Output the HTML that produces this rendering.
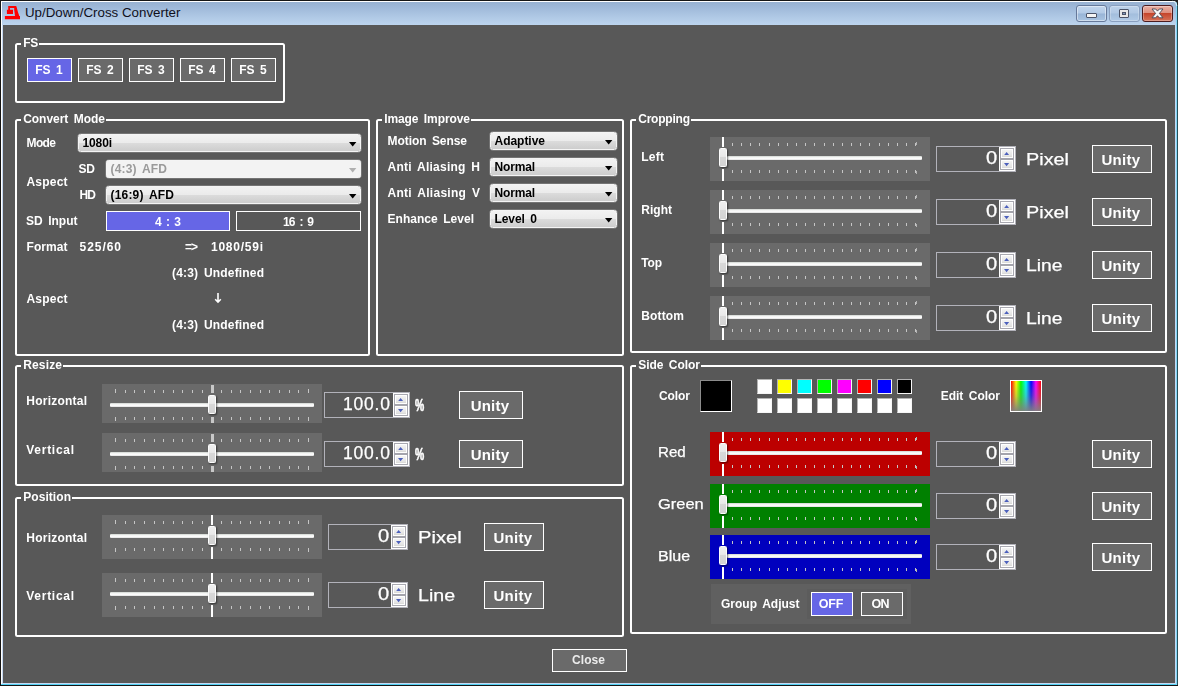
<!DOCTYPE html><html><head><meta charset="utf-8"><title>Up/Down/Cross Converter</title><style>
html,body{margin:0;padding:0}
body{width:1178px;height:686px;overflow:hidden;background:#585858;position:relative;font-family:"Liberation Sans",sans-serif}
div,svg{position:absolute}
.t{white-space:pre}
.g{border:2px solid #fff;border-radius:2.5px}
.b{border:1px solid #fff}
.sel{box-sizing:border-box;border-radius:2.5px;border:1px solid #f4f4f4;background:linear-gradient(#f2f2f2 0,#ebebeb 49%,#dcdcdc 50%,#cdcdcd 100%);box-shadow:0 0 0 0.5px rgba(255,255,255,.35)}
.sel.dis{background:#f3f3f3}
.tk{width:1px;height:3px;background:#c6c6c6}
.tr{height:4px;background:linear-gradient(#cdd2cd 0,#f1f2f1 30%,#fff 55%,#f2f2f2 80%,#dadada 100%);border-radius:1px}
.th{border-radius:1.5px;background:linear-gradient(#efefef 0,#e9e9e9 44%,#d8d8d8 45%,#d3d3d3 100%);border:1px solid #fcfcfc;box-sizing:border-box;box-shadow:1px 1px 2px rgba(0,0,0,.5)}
.sp{border:1px solid #b2b2ba;background:#585858}
.sb{left:3px;width:10px;height:7.3px;background:linear-gradient(#f4f4f4,#e4e4e4 80%,#d8d8d4)}
.sw{box-sizing:border-box;border:1px solid #f6f6f6;border-top-color:#b4b4b4;border-left-color:#b4b4b4}
</style></head><body>
<div style="left:0;top:0;width:1178px;height:686px;background:#151515"></div>
<div style="left:1px;top:1px;width:1177px;height:684.4px;background:#274f5a"></div>
<div style="left:1px;top:1px;width:1176px;height:684px;background:#7fd6f5"></div>
<div style="left:1px;top:1px;width:1175px;height:684px;background:#52d2f4"></div>
<div style="left:1px;top:1px;width:1175px;height:683px;background:#c6d8f2"></div>
<div style="left:1px;top:1px;width:1175px;height:24px;background:linear-gradient(#fff 0,#fff 1px,#98b2d2 1.5px,#a0bada 30%,#b1cae6 70%,#bcd4ee 100%)"></div>
<div style="left:1px;top:2px;width:1px;height:682px;background:#fff"></div>
<div style="left:3px;top:25px;width:1172px;height:658px;background:#585858"></div>
<svg style="left:1172px;top:0" width="6" height="6"><path d="M0 0H6V6L4.6 2.2L2.4 0.9z" fill="#222"/><path d="M0.5 1.2L3.6 2.4L4.8 5.8" stroke="#dff4fc" stroke-width="1" fill="none"/></svg>
<svg style="left:0;top:0" width="24" height="24" viewBox="0 0 24 24"><path fill="#fe0000" d="M8.2 5.9H16.2L16.9 8.1L18 12.2L19.3 16.1H20V19.2H4.9V16.1H15L14.5 12L14.2 9.9V8.1H10V9.8H13V13.9H6.9V9.8H8.2z"/></svg>
<div class="t" style="left:25.00px;top:7.36px;font-size:12.8px;line-height:12.8px;font-weight:normal;color:#10101c;letter-spacing:0.000px;transform:scaleX(1.0410);transform-origin:0 0;">Up/Down/Cross Converter</div>
<div style="left:1076px;top:5px;width:28.5px;height:14.5px;border:1px solid #66799a;border-radius:3px;background:linear-gradient(#c2d5ec 0,#b3cae6 48%,#98b4d6 52%,#a9c4e2 100%);box-shadow:inset 0 0 0 1px rgba(255,255,255,.45)"><div style="left:9.2px;top:7px;width:10.6px;height:4.8px;background:#f4f4f4;border:1px solid #4c5468;border-radius:1px;box-sizing:border-box"></div></div>
<div style="left:1109.3px;top:5px;width:28.5px;height:14.5px;border:1px solid #8aa0c0;border-radius:3px;background:linear-gradient(#bdd2ea 0,#b0c8e4 48%,#a2bddc 52%,#b0cae6 100%);box-shadow:inset 0 0 0 1px rgba(255,255,255,.25)"><div style="left:8.5px;top:3px;width:10.5px;height:9px;background:#e8e8e8;border:1px solid #4c5468;border-radius:1px;box-sizing:border-box"><div style="left:2px;top:2px;width:4.5px;height:3px;background:#7e96ba;border:1px solid #4c5468;box-sizing:border-box"></div></div></div>
<div style="left:1142px;top:5px;width:29px;height:14.5px;border:1px solid #4c1c20;border-radius:3px;background:linear-gradient(#e9b0a4 0,#de9080 44%,#c5452c 50%,#d67258 100%);box-shadow:inset 0 0 0 1px rgba(255,255,255,.3)"><svg width="13" height="11" style="left:8.3px;top:2.2px" viewBox="-1 -1 13 11"><path d="M0 0H3.7L5.5 2.1L7.3 0H11L7.4 4.4L11 8.8H7.3L5.5 6.7L3.7 8.8H0L3.6 4.4z" fill="#f8f8f8" stroke="#464654" stroke-width="0.9" stroke-linejoin="round"/></svg></div>
<div class="g" style="left:15.2px;top:43px;width:265.8px;height:56px"></div>
<div style="left:21.2px;top:41px;width:18.099999999999998px;height:6px;background:#585858"></div>
<div class="b" style="left:27px;top:58px;width:43px;height:22px;background:#6666e6"></div>
<div class="b" style="left:78px;top:58px;width:43px;height:22px;background:#6a6a6a"></div>
<div class="b" style="left:129px;top:58px;width:43px;height:22px;background:#6a6a6a"></div>
<div class="b" style="left:180px;top:58px;width:43px;height:22px;background:#6a6a6a"></div>
<div class="b" style="left:231px;top:58px;width:43px;height:22px;background:#6a6a6a"></div>
<div class="g" style="left:15.2px;top:119px;width:350.8px;height:233px"></div>
<div style="left:21.2px;top:117px;width:84.8px;height:6px;background:#585858"></div>
<div class="sel" style="left:78px;top:134px;width:282.5px;height:18px"></div>
<svg style="left:348.6px;top:142px" width="8" height="5"><path d="M0 0H7.4L3.7 4.5z" fill="#000"/></svg>
<div class="sel dis" style="left:106px;top:160px;width:255px;height:18px"></div>
<svg style="left:349.1px;top:168px" width="8" height="5"><path d="M0 0H7.4L3.7 4.5z" fill="#b0b0b0"/></svg>
<div class="sel" style="left:106px;top:186px;width:254.5px;height:18px"></div>
<svg style="left:348.6px;top:194px" width="8" height="5"><path d="M0 0H7.4L3.7 4.5z" fill="#000"/></svg>
<div class="b" style="left:106px;top:211px;width:122px;height:18px;background:#6666e6"></div>
<div class="b" style="left:236px;top:211px;width:123px;height:18px;background:#585858"></div>
<svg style="left:213.7px;top:293.3px" width="8" height="11" viewBox="0 0 8 11"><path d="M4 0V9M1.2 6.2L4 9.2L6.8 6.2" stroke="#fff" stroke-width="1.6" fill="none"/></svg>
<div class="g" style="left:376.2px;top:119px;width:243.8px;height:233px"></div>
<div style="left:382.2px;top:117px;width:88.80000000000001px;height:6px;background:#585858"></div>
<div class="sel" style="left:490px;top:132px;width:127px;height:18px"></div>
<svg style="left:605.1px;top:140px" width="8" height="5"><path d="M0 0H7.4L3.7 4.5z" fill="#000"/></svg>
<div class="sel" style="left:490px;top:158px;width:127px;height:18px"></div>
<svg style="left:605.1px;top:166px" width="8" height="5"><path d="M0 0H7.4L3.7 4.5z" fill="#000"/></svg>
<div class="sel" style="left:490px;top:184px;width:127px;height:18px"></div>
<svg style="left:605.1px;top:192px" width="8" height="5"><path d="M0 0H7.4L3.7 4.5z" fill="#000"/></svg>
<div class="sel" style="left:490px;top:210px;width:127px;height:18px"></div>
<svg style="left:605.1px;top:218px" width="8" height="5"><path d="M0 0H7.4L3.7 4.5z" fill="#000"/></svg>
<div class="g" style="left:630.2px;top:119px;width:532.8px;height:230px"></div>
<div style="left:636.2px;top:117px;width:54.799999999999955px;height:6px;background:#585858"></div>
<div style="left:710px;top:137px;width:220px;height:44px;background:#6a6a6a"></div>
<div class="tk" style="left:731.8px;top:143px;height:3px;width:1px;background:#c6c6c6"></div><div class="tk" style="left:731.8px;top:170px;height:3px;width:1px;background:#c6c6c6"></div><div class="tk" style="left:741.0px;top:143px;height:3px;width:1px;background:#c6c6c6"></div><div class="tk" style="left:741.0px;top:170px;height:3px;width:1px;background:#c6c6c6"></div><div class="tk" style="left:750.1px;top:143px;height:3px;width:1px;background:#c6c6c6"></div><div class="tk" style="left:750.1px;top:170px;height:3px;width:1px;background:#c6c6c6"></div><div class="tk" style="left:759.3px;top:143px;height:3px;width:1px;background:#c6c6c6"></div><div class="tk" style="left:759.3px;top:170px;height:3px;width:1px;background:#c6c6c6"></div><div class="tk" style="left:768.5px;top:143px;height:3px;width:1px;background:#c6c6c6"></div><div class="tk" style="left:768.5px;top:170px;height:3px;width:1px;background:#c6c6c6"></div><div class="tk" style="left:777.6px;top:143px;height:3px;width:1px;background:#c6c6c6"></div><div class="tk" style="left:777.6px;top:170px;height:3px;width:1px;background:#c6c6c6"></div><div class="tk" style="left:786.8px;top:143px;height:3px;width:1px;background:#c6c6c6"></div><div class="tk" style="left:786.8px;top:170px;height:3px;width:1px;background:#c6c6c6"></div><div class="tk" style="left:796.0px;top:143px;height:3px;width:1px;background:#c6c6c6"></div><div class="tk" style="left:796.0px;top:170px;height:3px;width:1px;background:#c6c6c6"></div><div class="tk" style="left:805.2px;top:143px;height:3px;width:1px;background:#c6c6c6"></div><div class="tk" style="left:805.2px;top:170px;height:3px;width:1px;background:#c6c6c6"></div><div class="tk" style="left:814.3px;top:143px;height:3px;width:1px;background:#c6c6c6"></div><div class="tk" style="left:814.3px;top:170px;height:3px;width:1px;background:#c6c6c6"></div><div class="tk" style="left:823.5px;top:143px;height:3px;width:1px;background:#c6c6c6"></div><div class="tk" style="left:823.5px;top:170px;height:3px;width:1px;background:#c6c6c6"></div><div class="tk" style="left:832.7px;top:143px;height:3px;width:1px;background:#c6c6c6"></div><div class="tk" style="left:832.7px;top:170px;height:3px;width:1px;background:#c6c6c6"></div><div class="tk" style="left:841.8px;top:143px;height:3px;width:1px;background:#c6c6c6"></div><div class="tk" style="left:841.8px;top:170px;height:3px;width:1px;background:#c6c6c6"></div><div class="tk" style="left:851.0px;top:143px;height:3px;width:1px;background:#c6c6c6"></div><div class="tk" style="left:851.0px;top:170px;height:3px;width:1px;background:#c6c6c6"></div><div class="tk" style="left:860.2px;top:143px;height:3px;width:1px;background:#c6c6c6"></div><div class="tk" style="left:860.2px;top:170px;height:3px;width:1px;background:#c6c6c6"></div><div class="tk" style="left:869.3px;top:143px;height:3px;width:1px;background:#c6c6c6"></div><div class="tk" style="left:869.3px;top:170px;height:3px;width:1px;background:#c6c6c6"></div><div class="tk" style="left:878.5px;top:143px;height:3px;width:1px;background:#c6c6c6"></div><div class="tk" style="left:878.5px;top:170px;height:3px;width:1px;background:#c6c6c6"></div><div class="tk" style="left:887.7px;top:143px;height:3px;width:1px;background:#c6c6c6"></div><div class="tk" style="left:887.7px;top:170px;height:3px;width:1px;background:#c6c6c6"></div><div class="tk" style="left:896.9px;top:143px;height:3px;width:1px;background:#c6c6c6"></div><div class="tk" style="left:896.9px;top:170px;height:3px;width:1px;background:#c6c6c6"></div><div class="tk" style="left:906.0px;top:143px;height:3px;width:1px;background:#c6c6c6"></div><div class="tk" style="left:906.0px;top:170px;height:3px;width:1px;background:#c6c6c6"></div><div class="tk" style="left:915.2px;top:143px;height:3px;width:1px;background:#c6c6c6"></div><div class="tk" style="left:916.4px;top:142px;height:3px;width:1px;background:#b4b4b4"></div><div class="tk" style="left:915.2px;top:170px;height:3px;width:1px;background:#c6c6c6"></div><div class="tk" style="left:916.4px;top:171px;height:3px;width:1px;background:#b4b4b4"></div><div style="left:722px;top:137px;width:2px;height:10px;background:#fff"></div><div style="left:722px;top:169px;width:2px;height:12px;background:#fff"></div><div class="tr" style="left:727px;top:156px;width:195px"></div><div class="th" style="left:718.8px;top:148px;width:8.6px;height:18.8px"></div>
<div class="sp" style="left:936px;top:146px;width:78px;height:24px"></div>
<div style="left:999px;top:147px;width:16px;height:24px;background:#fff"><div style="left:1px;top:1px;width:14px;height:22px;box-sizing:border-box;border:1px solid #a8a8b0"></div><div style="left:1px;top:11.3px;width:14px;height:1.3px;background:#a4a4ac"></div><div class="sb" style="top:3px"><svg width="6" height="3" style="left:1.9px;top:2px"><path d="M0 3.2L2.6 0L5.2 3.2z" fill="#4c60bc"/></svg></div><div class="sb" style="top:13.7px"><svg width="6" height="4" style="left:1.9px;top:2.3px"><path d="M0 0L2.6 3.2L5.2 0z" fill="#4c60bc"/></svg></div></div>
<div class="b" style="left:1092px;top:145px;width:58px;height:26px;background:#6a6a6a"></div>
<div style="left:710px;top:190px;width:220px;height:44px;background:#6a6a6a"></div>
<div class="tk" style="left:731.8px;top:196px;height:3px;width:1px;background:#c6c6c6"></div><div class="tk" style="left:731.8px;top:223px;height:3px;width:1px;background:#c6c6c6"></div><div class="tk" style="left:741.0px;top:196px;height:3px;width:1px;background:#c6c6c6"></div><div class="tk" style="left:741.0px;top:223px;height:3px;width:1px;background:#c6c6c6"></div><div class="tk" style="left:750.1px;top:196px;height:3px;width:1px;background:#c6c6c6"></div><div class="tk" style="left:750.1px;top:223px;height:3px;width:1px;background:#c6c6c6"></div><div class="tk" style="left:759.3px;top:196px;height:3px;width:1px;background:#c6c6c6"></div><div class="tk" style="left:759.3px;top:223px;height:3px;width:1px;background:#c6c6c6"></div><div class="tk" style="left:768.5px;top:196px;height:3px;width:1px;background:#c6c6c6"></div><div class="tk" style="left:768.5px;top:223px;height:3px;width:1px;background:#c6c6c6"></div><div class="tk" style="left:777.6px;top:196px;height:3px;width:1px;background:#c6c6c6"></div><div class="tk" style="left:777.6px;top:223px;height:3px;width:1px;background:#c6c6c6"></div><div class="tk" style="left:786.8px;top:196px;height:3px;width:1px;background:#c6c6c6"></div><div class="tk" style="left:786.8px;top:223px;height:3px;width:1px;background:#c6c6c6"></div><div class="tk" style="left:796.0px;top:196px;height:3px;width:1px;background:#c6c6c6"></div><div class="tk" style="left:796.0px;top:223px;height:3px;width:1px;background:#c6c6c6"></div><div class="tk" style="left:805.2px;top:196px;height:3px;width:1px;background:#c6c6c6"></div><div class="tk" style="left:805.2px;top:223px;height:3px;width:1px;background:#c6c6c6"></div><div class="tk" style="left:814.3px;top:196px;height:3px;width:1px;background:#c6c6c6"></div><div class="tk" style="left:814.3px;top:223px;height:3px;width:1px;background:#c6c6c6"></div><div class="tk" style="left:823.5px;top:196px;height:3px;width:1px;background:#c6c6c6"></div><div class="tk" style="left:823.5px;top:223px;height:3px;width:1px;background:#c6c6c6"></div><div class="tk" style="left:832.7px;top:196px;height:3px;width:1px;background:#c6c6c6"></div><div class="tk" style="left:832.7px;top:223px;height:3px;width:1px;background:#c6c6c6"></div><div class="tk" style="left:841.8px;top:196px;height:3px;width:1px;background:#c6c6c6"></div><div class="tk" style="left:841.8px;top:223px;height:3px;width:1px;background:#c6c6c6"></div><div class="tk" style="left:851.0px;top:196px;height:3px;width:1px;background:#c6c6c6"></div><div class="tk" style="left:851.0px;top:223px;height:3px;width:1px;background:#c6c6c6"></div><div class="tk" style="left:860.2px;top:196px;height:3px;width:1px;background:#c6c6c6"></div><div class="tk" style="left:860.2px;top:223px;height:3px;width:1px;background:#c6c6c6"></div><div class="tk" style="left:869.3px;top:196px;height:3px;width:1px;background:#c6c6c6"></div><div class="tk" style="left:869.3px;top:223px;height:3px;width:1px;background:#c6c6c6"></div><div class="tk" style="left:878.5px;top:196px;height:3px;width:1px;background:#c6c6c6"></div><div class="tk" style="left:878.5px;top:223px;height:3px;width:1px;background:#c6c6c6"></div><div class="tk" style="left:887.7px;top:196px;height:3px;width:1px;background:#c6c6c6"></div><div class="tk" style="left:887.7px;top:223px;height:3px;width:1px;background:#c6c6c6"></div><div class="tk" style="left:896.9px;top:196px;height:3px;width:1px;background:#c6c6c6"></div><div class="tk" style="left:896.9px;top:223px;height:3px;width:1px;background:#c6c6c6"></div><div class="tk" style="left:906.0px;top:196px;height:3px;width:1px;background:#c6c6c6"></div><div class="tk" style="left:906.0px;top:223px;height:3px;width:1px;background:#c6c6c6"></div><div class="tk" style="left:915.2px;top:196px;height:3px;width:1px;background:#c6c6c6"></div><div class="tk" style="left:916.4px;top:195px;height:3px;width:1px;background:#b4b4b4"></div><div class="tk" style="left:915.2px;top:223px;height:3px;width:1px;background:#c6c6c6"></div><div class="tk" style="left:916.4px;top:224px;height:3px;width:1px;background:#b4b4b4"></div><div style="left:722px;top:190px;width:2px;height:10px;background:#fff"></div><div style="left:722px;top:222px;width:2px;height:12px;background:#fff"></div><div class="tr" style="left:727px;top:209px;width:195px"></div><div class="th" style="left:718.8px;top:201px;width:8.6px;height:18.8px"></div>
<div class="sp" style="left:936px;top:199px;width:78px;height:24px"></div>
<div style="left:999px;top:200px;width:16px;height:24px;background:#fff"><div style="left:1px;top:1px;width:14px;height:22px;box-sizing:border-box;border:1px solid #a8a8b0"></div><div style="left:1px;top:11.3px;width:14px;height:1.3px;background:#a4a4ac"></div><div class="sb" style="top:3px"><svg width="6" height="3" style="left:1.9px;top:2px"><path d="M0 3.2L2.6 0L5.2 3.2z" fill="#4c60bc"/></svg></div><div class="sb" style="top:13.7px"><svg width="6" height="4" style="left:1.9px;top:2.3px"><path d="M0 0L2.6 3.2L5.2 0z" fill="#4c60bc"/></svg></div></div>
<div class="b" style="left:1092px;top:198px;width:58px;height:26px;background:#6a6a6a"></div>
<div style="left:710px;top:243px;width:220px;height:44px;background:#6a6a6a"></div>
<div class="tk" style="left:731.8px;top:249px;height:3px;width:1px;background:#c6c6c6"></div><div class="tk" style="left:731.8px;top:276px;height:3px;width:1px;background:#c6c6c6"></div><div class="tk" style="left:741.0px;top:249px;height:3px;width:1px;background:#c6c6c6"></div><div class="tk" style="left:741.0px;top:276px;height:3px;width:1px;background:#c6c6c6"></div><div class="tk" style="left:750.1px;top:249px;height:3px;width:1px;background:#c6c6c6"></div><div class="tk" style="left:750.1px;top:276px;height:3px;width:1px;background:#c6c6c6"></div><div class="tk" style="left:759.3px;top:249px;height:3px;width:1px;background:#c6c6c6"></div><div class="tk" style="left:759.3px;top:276px;height:3px;width:1px;background:#c6c6c6"></div><div class="tk" style="left:768.5px;top:249px;height:3px;width:1px;background:#c6c6c6"></div><div class="tk" style="left:768.5px;top:276px;height:3px;width:1px;background:#c6c6c6"></div><div class="tk" style="left:777.6px;top:249px;height:3px;width:1px;background:#c6c6c6"></div><div class="tk" style="left:777.6px;top:276px;height:3px;width:1px;background:#c6c6c6"></div><div class="tk" style="left:786.8px;top:249px;height:3px;width:1px;background:#c6c6c6"></div><div class="tk" style="left:786.8px;top:276px;height:3px;width:1px;background:#c6c6c6"></div><div class="tk" style="left:796.0px;top:249px;height:3px;width:1px;background:#c6c6c6"></div><div class="tk" style="left:796.0px;top:276px;height:3px;width:1px;background:#c6c6c6"></div><div class="tk" style="left:805.2px;top:249px;height:3px;width:1px;background:#c6c6c6"></div><div class="tk" style="left:805.2px;top:276px;height:3px;width:1px;background:#c6c6c6"></div><div class="tk" style="left:814.3px;top:249px;height:3px;width:1px;background:#c6c6c6"></div><div class="tk" style="left:814.3px;top:276px;height:3px;width:1px;background:#c6c6c6"></div><div class="tk" style="left:823.5px;top:249px;height:3px;width:1px;background:#c6c6c6"></div><div class="tk" style="left:823.5px;top:276px;height:3px;width:1px;background:#c6c6c6"></div><div class="tk" style="left:832.7px;top:249px;height:3px;width:1px;background:#c6c6c6"></div><div class="tk" style="left:832.7px;top:276px;height:3px;width:1px;background:#c6c6c6"></div><div class="tk" style="left:841.8px;top:249px;height:3px;width:1px;background:#c6c6c6"></div><div class="tk" style="left:841.8px;top:276px;height:3px;width:1px;background:#c6c6c6"></div><div class="tk" style="left:851.0px;top:249px;height:3px;width:1px;background:#c6c6c6"></div><div class="tk" style="left:851.0px;top:276px;height:3px;width:1px;background:#c6c6c6"></div><div class="tk" style="left:860.2px;top:249px;height:3px;width:1px;background:#c6c6c6"></div><div class="tk" style="left:860.2px;top:276px;height:3px;width:1px;background:#c6c6c6"></div><div class="tk" style="left:869.3px;top:249px;height:3px;width:1px;background:#c6c6c6"></div><div class="tk" style="left:869.3px;top:276px;height:3px;width:1px;background:#c6c6c6"></div><div class="tk" style="left:878.5px;top:249px;height:3px;width:1px;background:#c6c6c6"></div><div class="tk" style="left:878.5px;top:276px;height:3px;width:1px;background:#c6c6c6"></div><div class="tk" style="left:887.7px;top:249px;height:3px;width:1px;background:#c6c6c6"></div><div class="tk" style="left:887.7px;top:276px;height:3px;width:1px;background:#c6c6c6"></div><div class="tk" style="left:896.9px;top:249px;height:3px;width:1px;background:#c6c6c6"></div><div class="tk" style="left:896.9px;top:276px;height:3px;width:1px;background:#c6c6c6"></div><div class="tk" style="left:906.0px;top:249px;height:3px;width:1px;background:#c6c6c6"></div><div class="tk" style="left:906.0px;top:276px;height:3px;width:1px;background:#c6c6c6"></div><div class="tk" style="left:915.2px;top:249px;height:3px;width:1px;background:#c6c6c6"></div><div class="tk" style="left:916.4px;top:248px;height:3px;width:1px;background:#b4b4b4"></div><div class="tk" style="left:915.2px;top:276px;height:3px;width:1px;background:#c6c6c6"></div><div class="tk" style="left:916.4px;top:277px;height:3px;width:1px;background:#b4b4b4"></div><div style="left:722px;top:243px;width:2px;height:10px;background:#fff"></div><div style="left:722px;top:275px;width:2px;height:12px;background:#fff"></div><div class="tr" style="left:727px;top:262px;width:195px"></div><div class="th" style="left:718.8px;top:254px;width:8.6px;height:18.8px"></div>
<div class="sp" style="left:936px;top:252px;width:78px;height:24px"></div>
<div style="left:999px;top:253px;width:16px;height:24px;background:#fff"><div style="left:1px;top:1px;width:14px;height:22px;box-sizing:border-box;border:1px solid #a8a8b0"></div><div style="left:1px;top:11.3px;width:14px;height:1.3px;background:#a4a4ac"></div><div class="sb" style="top:3px"><svg width="6" height="3" style="left:1.9px;top:2px"><path d="M0 3.2L2.6 0L5.2 3.2z" fill="#4c60bc"/></svg></div><div class="sb" style="top:13.7px"><svg width="6" height="4" style="left:1.9px;top:2.3px"><path d="M0 0L2.6 3.2L5.2 0z" fill="#4c60bc"/></svg></div></div>
<div class="b" style="left:1092px;top:251px;width:58px;height:26px;background:#6a6a6a"></div>
<div style="left:710px;top:296px;width:220px;height:44px;background:#6a6a6a"></div>
<div class="tk" style="left:731.8px;top:302px;height:3px;width:1px;background:#c6c6c6"></div><div class="tk" style="left:731.8px;top:329px;height:3px;width:1px;background:#c6c6c6"></div><div class="tk" style="left:741.0px;top:302px;height:3px;width:1px;background:#c6c6c6"></div><div class="tk" style="left:741.0px;top:329px;height:3px;width:1px;background:#c6c6c6"></div><div class="tk" style="left:750.1px;top:302px;height:3px;width:1px;background:#c6c6c6"></div><div class="tk" style="left:750.1px;top:329px;height:3px;width:1px;background:#c6c6c6"></div><div class="tk" style="left:759.3px;top:302px;height:3px;width:1px;background:#c6c6c6"></div><div class="tk" style="left:759.3px;top:329px;height:3px;width:1px;background:#c6c6c6"></div><div class="tk" style="left:768.5px;top:302px;height:3px;width:1px;background:#c6c6c6"></div><div class="tk" style="left:768.5px;top:329px;height:3px;width:1px;background:#c6c6c6"></div><div class="tk" style="left:777.6px;top:302px;height:3px;width:1px;background:#c6c6c6"></div><div class="tk" style="left:777.6px;top:329px;height:3px;width:1px;background:#c6c6c6"></div><div class="tk" style="left:786.8px;top:302px;height:3px;width:1px;background:#c6c6c6"></div><div class="tk" style="left:786.8px;top:329px;height:3px;width:1px;background:#c6c6c6"></div><div class="tk" style="left:796.0px;top:302px;height:3px;width:1px;background:#c6c6c6"></div><div class="tk" style="left:796.0px;top:329px;height:3px;width:1px;background:#c6c6c6"></div><div class="tk" style="left:805.2px;top:302px;height:3px;width:1px;background:#c6c6c6"></div><div class="tk" style="left:805.2px;top:329px;height:3px;width:1px;background:#c6c6c6"></div><div class="tk" style="left:814.3px;top:302px;height:3px;width:1px;background:#c6c6c6"></div><div class="tk" style="left:814.3px;top:329px;height:3px;width:1px;background:#c6c6c6"></div><div class="tk" style="left:823.5px;top:302px;height:3px;width:1px;background:#c6c6c6"></div><div class="tk" style="left:823.5px;top:329px;height:3px;width:1px;background:#c6c6c6"></div><div class="tk" style="left:832.7px;top:302px;height:3px;width:1px;background:#c6c6c6"></div><div class="tk" style="left:832.7px;top:329px;height:3px;width:1px;background:#c6c6c6"></div><div class="tk" style="left:841.8px;top:302px;height:3px;width:1px;background:#c6c6c6"></div><div class="tk" style="left:841.8px;top:329px;height:3px;width:1px;background:#c6c6c6"></div><div class="tk" style="left:851.0px;top:302px;height:3px;width:1px;background:#c6c6c6"></div><div class="tk" style="left:851.0px;top:329px;height:3px;width:1px;background:#c6c6c6"></div><div class="tk" style="left:860.2px;top:302px;height:3px;width:1px;background:#c6c6c6"></div><div class="tk" style="left:860.2px;top:329px;height:3px;width:1px;background:#c6c6c6"></div><div class="tk" style="left:869.3px;top:302px;height:3px;width:1px;background:#c6c6c6"></div><div class="tk" style="left:869.3px;top:329px;height:3px;width:1px;background:#c6c6c6"></div><div class="tk" style="left:878.5px;top:302px;height:3px;width:1px;background:#c6c6c6"></div><div class="tk" style="left:878.5px;top:329px;height:3px;width:1px;background:#c6c6c6"></div><div class="tk" style="left:887.7px;top:302px;height:3px;width:1px;background:#c6c6c6"></div><div class="tk" style="left:887.7px;top:329px;height:3px;width:1px;background:#c6c6c6"></div><div class="tk" style="left:896.9px;top:302px;height:3px;width:1px;background:#c6c6c6"></div><div class="tk" style="left:896.9px;top:329px;height:3px;width:1px;background:#c6c6c6"></div><div class="tk" style="left:906.0px;top:302px;height:3px;width:1px;background:#c6c6c6"></div><div class="tk" style="left:906.0px;top:329px;height:3px;width:1px;background:#c6c6c6"></div><div class="tk" style="left:915.2px;top:302px;height:3px;width:1px;background:#c6c6c6"></div><div class="tk" style="left:916.4px;top:301px;height:3px;width:1px;background:#b4b4b4"></div><div class="tk" style="left:915.2px;top:329px;height:3px;width:1px;background:#c6c6c6"></div><div class="tk" style="left:916.4px;top:330px;height:3px;width:1px;background:#b4b4b4"></div><div style="left:722px;top:296px;width:2px;height:10px;background:#fff"></div><div style="left:722px;top:328px;width:2px;height:12px;background:#fff"></div><div class="tr" style="left:727px;top:315px;width:195px"></div><div class="th" style="left:718.8px;top:307px;width:8.6px;height:18.8px"></div>
<div class="sp" style="left:936px;top:305px;width:78px;height:24px"></div>
<div style="left:999px;top:306px;width:16px;height:24px;background:#fff"><div style="left:1px;top:1px;width:14px;height:22px;box-sizing:border-box;border:1px solid #a8a8b0"></div><div style="left:1px;top:11.3px;width:14px;height:1.3px;background:#a4a4ac"></div><div class="sb" style="top:3px"><svg width="6" height="3" style="left:1.9px;top:2px"><path d="M0 3.2L2.6 0L5.2 3.2z" fill="#4c60bc"/></svg></div><div class="sb" style="top:13.7px"><svg width="6" height="4" style="left:1.9px;top:2.3px"><path d="M0 0L2.6 3.2L5.2 0z" fill="#4c60bc"/></svg></div></div>
<div class="b" style="left:1092px;top:304px;width:58px;height:26px;background:#6a6a6a"></div>
<div class="g" style="left:15.2px;top:365px;width:604.8px;height:117px"></div>
<div style="left:21.2px;top:363px;width:41.8px;height:6px;background:#585858"></div>
<div style="left:102px;top:384px;width:220px;height:39px;background:#6a6a6a"></div>
<div class="tk" style="left:114.9px;top:389px;height:4px;width:1px;background:#c6c6c6"></div><div class="tk" style="left:114.9px;top:417px;height:4px;width:1px;background:#c6c6c6"></div><div class="tk" style="left:124.6px;top:390px;height:3px;width:1px;background:#c6c6c6"></div><div class="tk" style="left:124.6px;top:417px;height:3px;width:1px;background:#c6c6c6"></div><div class="tk" style="left:134.2px;top:390px;height:3px;width:1px;background:#c6c6c6"></div><div class="tk" style="left:134.2px;top:417px;height:3px;width:1px;background:#c6c6c6"></div><div class="tk" style="left:143.9px;top:390px;height:3px;width:1px;background:#c6c6c6"></div><div class="tk" style="left:143.9px;top:417px;height:3px;width:1px;background:#c6c6c6"></div><div class="tk" style="left:153.5px;top:390px;height:3px;width:1px;background:#c6c6c6"></div><div class="tk" style="left:153.5px;top:417px;height:3px;width:1px;background:#c6c6c6"></div><div class="tk" style="left:163.2px;top:390px;height:3px;width:1px;background:#c6c6c6"></div><div class="tk" style="left:163.2px;top:417px;height:3px;width:1px;background:#c6c6c6"></div><div class="tk" style="left:172.8px;top:390px;height:3px;width:1px;background:#c6c6c6"></div><div class="tk" style="left:172.8px;top:417px;height:3px;width:1px;background:#c6c6c6"></div><div class="tk" style="left:182.4px;top:390px;height:3px;width:1px;background:#c6c6c6"></div><div class="tk" style="left:182.4px;top:417px;height:3px;width:1px;background:#c6c6c6"></div><div class="tk" style="left:192.1px;top:390px;height:3px;width:1px;background:#c6c6c6"></div><div class="tk" style="left:192.1px;top:417px;height:3px;width:1px;background:#c6c6c6"></div><div class="tk" style="left:201.8px;top:390px;height:3px;width:1px;background:#c6c6c6"></div><div class="tk" style="left:201.8px;top:417px;height:3px;width:1px;background:#c6c6c6"></div><div class="tk" style="left:221.1px;top:390px;height:3px;width:1px;background:#c6c6c6"></div><div class="tk" style="left:221.1px;top:417px;height:3px;width:1px;background:#c6c6c6"></div><div class="tk" style="left:230.7px;top:390px;height:3px;width:1px;background:#c6c6c6"></div><div class="tk" style="left:230.7px;top:417px;height:3px;width:1px;background:#c6c6c6"></div><div class="tk" style="left:240.4px;top:390px;height:3px;width:1px;background:#c6c6c6"></div><div class="tk" style="left:240.4px;top:417px;height:3px;width:1px;background:#c6c6c6"></div><div class="tk" style="left:250.0px;top:390px;height:3px;width:1px;background:#c6c6c6"></div><div class="tk" style="left:250.0px;top:417px;height:3px;width:1px;background:#c6c6c6"></div><div class="tk" style="left:259.6px;top:390px;height:3px;width:1px;background:#c6c6c6"></div><div class="tk" style="left:259.6px;top:417px;height:3px;width:1px;background:#c6c6c6"></div><div class="tk" style="left:269.3px;top:390px;height:3px;width:1px;background:#c6c6c6"></div><div class="tk" style="left:269.3px;top:417px;height:3px;width:1px;background:#c6c6c6"></div><div class="tk" style="left:279.0px;top:390px;height:3px;width:1px;background:#c6c6c6"></div><div class="tk" style="left:279.0px;top:417px;height:3px;width:1px;background:#c6c6c6"></div><div class="tk" style="left:288.6px;top:390px;height:3px;width:1px;background:#c6c6c6"></div><div class="tk" style="left:288.6px;top:417px;height:3px;width:1px;background:#c6c6c6"></div><div class="tk" style="left:298.2px;top:390px;height:3px;width:1px;background:#c6c6c6"></div><div class="tk" style="left:298.2px;top:417px;height:3px;width:1px;background:#c6c6c6"></div><div class="tk" style="left:307.9px;top:389px;height:4px;width:1px;background:#c6c6c6"></div><div class="tk" style="left:307.9px;top:417px;height:4px;width:1px;background:#c6c6c6"></div><div style="left:211.0px;top:385px;width:3px;height:8px;background:#c8c8c8"></div><div style="left:211.0px;top:417px;width:3px;height:6px;background:#c8c8c8"></div><div class="tr" style="left:110px;top:403px;width:204px"></div><div class="th" style="left:207.9px;top:394.6px;width:8.6px;height:19.8px"></div>
<div class="sp" style="left:324px;top:392px;width:84px;height:24px"></div>
<div style="left:393px;top:393px;width:16px;height:24px;background:#fff"><div style="left:1px;top:1px;width:14px;height:22px;box-sizing:border-box;border:1px solid #a8a8b0"></div><div style="left:1px;top:11.3px;width:14px;height:1.3px;background:#a4a4ac"></div><div class="sb" style="top:3px"><svg width="6" height="3" style="left:1.9px;top:2px"><path d="M0 3.2L2.6 0L5.2 3.2z" fill="#4c60bc"/></svg></div><div class="sb" style="top:13.7px"><svg width="6" height="4" style="left:1.9px;top:2.3px"><path d="M0 0L2.6 3.2L5.2 0z" fill="#4c60bc"/></svg></div></div>
<div class="b" style="left:459px;top:391px;width:62px;height:26px;background:#6a6a6a"></div>
<div style="left:102px;top:433px;width:220px;height:39px;background:#6a6a6a"></div>
<div class="tk" style="left:114.9px;top:438px;height:4px;width:1px;background:#c6c6c6"></div><div class="tk" style="left:114.9px;top:466px;height:4px;width:1px;background:#c6c6c6"></div><div class="tk" style="left:124.6px;top:439px;height:3px;width:1px;background:#c6c6c6"></div><div class="tk" style="left:124.6px;top:466px;height:3px;width:1px;background:#c6c6c6"></div><div class="tk" style="left:134.2px;top:439px;height:3px;width:1px;background:#c6c6c6"></div><div class="tk" style="left:134.2px;top:466px;height:3px;width:1px;background:#c6c6c6"></div><div class="tk" style="left:143.9px;top:439px;height:3px;width:1px;background:#c6c6c6"></div><div class="tk" style="left:143.9px;top:466px;height:3px;width:1px;background:#c6c6c6"></div><div class="tk" style="left:153.5px;top:439px;height:3px;width:1px;background:#c6c6c6"></div><div class="tk" style="left:153.5px;top:466px;height:3px;width:1px;background:#c6c6c6"></div><div class="tk" style="left:163.2px;top:439px;height:3px;width:1px;background:#c6c6c6"></div><div class="tk" style="left:163.2px;top:466px;height:3px;width:1px;background:#c6c6c6"></div><div class="tk" style="left:172.8px;top:439px;height:3px;width:1px;background:#c6c6c6"></div><div class="tk" style="left:172.8px;top:466px;height:3px;width:1px;background:#c6c6c6"></div><div class="tk" style="left:182.4px;top:439px;height:3px;width:1px;background:#c6c6c6"></div><div class="tk" style="left:182.4px;top:466px;height:3px;width:1px;background:#c6c6c6"></div><div class="tk" style="left:192.1px;top:439px;height:3px;width:1px;background:#c6c6c6"></div><div class="tk" style="left:192.1px;top:466px;height:3px;width:1px;background:#c6c6c6"></div><div class="tk" style="left:201.8px;top:439px;height:3px;width:1px;background:#c6c6c6"></div><div class="tk" style="left:201.8px;top:466px;height:3px;width:1px;background:#c6c6c6"></div><div class="tk" style="left:221.1px;top:439px;height:3px;width:1px;background:#c6c6c6"></div><div class="tk" style="left:221.1px;top:466px;height:3px;width:1px;background:#c6c6c6"></div><div class="tk" style="left:230.7px;top:439px;height:3px;width:1px;background:#c6c6c6"></div><div class="tk" style="left:230.7px;top:466px;height:3px;width:1px;background:#c6c6c6"></div><div class="tk" style="left:240.4px;top:439px;height:3px;width:1px;background:#c6c6c6"></div><div class="tk" style="left:240.4px;top:466px;height:3px;width:1px;background:#c6c6c6"></div><div class="tk" style="left:250.0px;top:439px;height:3px;width:1px;background:#c6c6c6"></div><div class="tk" style="left:250.0px;top:466px;height:3px;width:1px;background:#c6c6c6"></div><div class="tk" style="left:259.6px;top:439px;height:3px;width:1px;background:#c6c6c6"></div><div class="tk" style="left:259.6px;top:466px;height:3px;width:1px;background:#c6c6c6"></div><div class="tk" style="left:269.3px;top:439px;height:3px;width:1px;background:#c6c6c6"></div><div class="tk" style="left:269.3px;top:466px;height:3px;width:1px;background:#c6c6c6"></div><div class="tk" style="left:279.0px;top:439px;height:3px;width:1px;background:#c6c6c6"></div><div class="tk" style="left:279.0px;top:466px;height:3px;width:1px;background:#c6c6c6"></div><div class="tk" style="left:288.6px;top:439px;height:3px;width:1px;background:#c6c6c6"></div><div class="tk" style="left:288.6px;top:466px;height:3px;width:1px;background:#c6c6c6"></div><div class="tk" style="left:298.2px;top:439px;height:3px;width:1px;background:#c6c6c6"></div><div class="tk" style="left:298.2px;top:466px;height:3px;width:1px;background:#c6c6c6"></div><div class="tk" style="left:307.9px;top:438px;height:4px;width:1px;background:#c6c6c6"></div><div class="tk" style="left:307.9px;top:466px;height:4px;width:1px;background:#c6c6c6"></div><div style="left:211.0px;top:434px;width:3px;height:8px;background:#c8c8c8"></div><div style="left:211.0px;top:466px;width:3px;height:6px;background:#c8c8c8"></div><div class="tr" style="left:110px;top:452px;width:204px"></div><div class="th" style="left:207.9px;top:443.6px;width:8.6px;height:19.8px"></div>
<div class="sp" style="left:324px;top:441px;width:84px;height:24px"></div>
<div style="left:393px;top:442px;width:16px;height:24px;background:#fff"><div style="left:1px;top:1px;width:14px;height:22px;box-sizing:border-box;border:1px solid #a8a8b0"></div><div style="left:1px;top:11.3px;width:14px;height:1.3px;background:#a4a4ac"></div><div class="sb" style="top:3px"><svg width="6" height="3" style="left:1.9px;top:2px"><path d="M0 3.2L2.6 0L5.2 3.2z" fill="#4c60bc"/></svg></div><div class="sb" style="top:13.7px"><svg width="6" height="4" style="left:1.9px;top:2.3px"><path d="M0 0L2.6 3.2L5.2 0z" fill="#4c60bc"/></svg></div></div>
<div class="b" style="left:459px;top:440px;width:62px;height:26px;background:#6a6a6a"></div>
<div class="g" style="left:15.2px;top:497px;width:604.8px;height:136px"></div>
<div style="left:21.2px;top:495px;width:50.8px;height:6px;background:#585858"></div>
<div style="left:102px;top:515px;width:220px;height:44px;background:#6a6a6a"></div>
<div class="tk" style="left:114.9px;top:520px;height:4px;width:1px;background:#c6c6c6"></div><div class="tk" style="left:114.9px;top:548px;height:4px;width:1px;background:#c6c6c6"></div><div class="tk" style="left:124.6px;top:521px;height:3px;width:1px;background:#c6c6c6"></div><div class="tk" style="left:124.6px;top:548px;height:3px;width:1px;background:#c6c6c6"></div><div class="tk" style="left:134.2px;top:521px;height:3px;width:1px;background:#c6c6c6"></div><div class="tk" style="left:134.2px;top:548px;height:3px;width:1px;background:#c6c6c6"></div><div class="tk" style="left:143.9px;top:521px;height:3px;width:1px;background:#c6c6c6"></div><div class="tk" style="left:143.9px;top:548px;height:3px;width:1px;background:#c6c6c6"></div><div class="tk" style="left:153.5px;top:521px;height:3px;width:1px;background:#c6c6c6"></div><div class="tk" style="left:153.5px;top:548px;height:3px;width:1px;background:#c6c6c6"></div><div class="tk" style="left:163.2px;top:521px;height:3px;width:1px;background:#c6c6c6"></div><div class="tk" style="left:163.2px;top:548px;height:3px;width:1px;background:#c6c6c6"></div><div class="tk" style="left:172.8px;top:521px;height:3px;width:1px;background:#c6c6c6"></div><div class="tk" style="left:172.8px;top:548px;height:3px;width:1px;background:#c6c6c6"></div><div class="tk" style="left:182.4px;top:521px;height:3px;width:1px;background:#c6c6c6"></div><div class="tk" style="left:182.4px;top:548px;height:3px;width:1px;background:#c6c6c6"></div><div class="tk" style="left:192.1px;top:521px;height:3px;width:1px;background:#c6c6c6"></div><div class="tk" style="left:192.1px;top:548px;height:3px;width:1px;background:#c6c6c6"></div><div class="tk" style="left:201.8px;top:521px;height:3px;width:1px;background:#c6c6c6"></div><div class="tk" style="left:201.8px;top:548px;height:3px;width:1px;background:#c6c6c6"></div><div class="tk" style="left:221.1px;top:521px;height:3px;width:1px;background:#c6c6c6"></div><div class="tk" style="left:221.1px;top:548px;height:3px;width:1px;background:#c6c6c6"></div><div class="tk" style="left:230.7px;top:521px;height:3px;width:1px;background:#c6c6c6"></div><div class="tk" style="left:230.7px;top:548px;height:3px;width:1px;background:#c6c6c6"></div><div class="tk" style="left:240.4px;top:521px;height:3px;width:1px;background:#c6c6c6"></div><div class="tk" style="left:240.4px;top:548px;height:3px;width:1px;background:#c6c6c6"></div><div class="tk" style="left:250.0px;top:521px;height:3px;width:1px;background:#c6c6c6"></div><div class="tk" style="left:250.0px;top:548px;height:3px;width:1px;background:#c6c6c6"></div><div class="tk" style="left:259.6px;top:521px;height:3px;width:1px;background:#c6c6c6"></div><div class="tk" style="left:259.6px;top:548px;height:3px;width:1px;background:#c6c6c6"></div><div class="tk" style="left:269.3px;top:521px;height:3px;width:1px;background:#c6c6c6"></div><div class="tk" style="left:269.3px;top:548px;height:3px;width:1px;background:#c6c6c6"></div><div class="tk" style="left:279.0px;top:521px;height:3px;width:1px;background:#c6c6c6"></div><div class="tk" style="left:279.0px;top:548px;height:3px;width:1px;background:#c6c6c6"></div><div class="tk" style="left:288.6px;top:521px;height:3px;width:1px;background:#c6c6c6"></div><div class="tk" style="left:288.6px;top:548px;height:3px;width:1px;background:#c6c6c6"></div><div class="tk" style="left:298.2px;top:521px;height:3px;width:1px;background:#c6c6c6"></div><div class="tk" style="left:298.2px;top:548px;height:3px;width:1px;background:#c6c6c6"></div><div class="tk" style="left:307.9px;top:520px;height:4px;width:1px;background:#c6c6c6"></div><div class="tk" style="left:307.9px;top:548px;height:4px;width:1px;background:#c6c6c6"></div><div style="left:211.0px;top:515px;width:2px;height:9.6px;background:#fff"></div><div style="left:211.0px;top:547.2px;width:2px;height:11.799999999999997px;background:#fff"></div><div class="tr" style="left:110px;top:534px;width:204px"></div><div class="th" style="left:207.9px;top:526px;width:8.6px;height:19px"></div>
<div class="sp" style="left:328px;top:524px;width:78px;height:24px"></div>
<div style="left:391px;top:525px;width:16px;height:24px;background:#fff"><div style="left:1px;top:1px;width:14px;height:22px;box-sizing:border-box;border:1px solid #a8a8b0"></div><div style="left:1px;top:11.3px;width:14px;height:1.3px;background:#a4a4ac"></div><div class="sb" style="top:3px"><svg width="6" height="3" style="left:1.9px;top:2px"><path d="M0 3.2L2.6 0L5.2 3.2z" fill="#4c60bc"/></svg></div><div class="sb" style="top:13.7px"><svg width="6" height="4" style="left:1.9px;top:2.3px"><path d="M0 0L2.6 3.2L5.2 0z" fill="#4c60bc"/></svg></div></div>
<div class="b" style="left:484px;top:523px;width:58px;height:26px;background:#6a6a6a"></div>
<div style="left:102px;top:573px;width:220px;height:44px;background:#6a6a6a"></div>
<div class="tk" style="left:114.9px;top:578px;height:4px;width:1px;background:#c6c6c6"></div><div class="tk" style="left:114.9px;top:606px;height:4px;width:1px;background:#c6c6c6"></div><div class="tk" style="left:124.6px;top:579px;height:3px;width:1px;background:#c6c6c6"></div><div class="tk" style="left:124.6px;top:606px;height:3px;width:1px;background:#c6c6c6"></div><div class="tk" style="left:134.2px;top:579px;height:3px;width:1px;background:#c6c6c6"></div><div class="tk" style="left:134.2px;top:606px;height:3px;width:1px;background:#c6c6c6"></div><div class="tk" style="left:143.9px;top:579px;height:3px;width:1px;background:#c6c6c6"></div><div class="tk" style="left:143.9px;top:606px;height:3px;width:1px;background:#c6c6c6"></div><div class="tk" style="left:153.5px;top:579px;height:3px;width:1px;background:#c6c6c6"></div><div class="tk" style="left:153.5px;top:606px;height:3px;width:1px;background:#c6c6c6"></div><div class="tk" style="left:163.2px;top:579px;height:3px;width:1px;background:#c6c6c6"></div><div class="tk" style="left:163.2px;top:606px;height:3px;width:1px;background:#c6c6c6"></div><div class="tk" style="left:172.8px;top:579px;height:3px;width:1px;background:#c6c6c6"></div><div class="tk" style="left:172.8px;top:606px;height:3px;width:1px;background:#c6c6c6"></div><div class="tk" style="left:182.4px;top:579px;height:3px;width:1px;background:#c6c6c6"></div><div class="tk" style="left:182.4px;top:606px;height:3px;width:1px;background:#c6c6c6"></div><div class="tk" style="left:192.1px;top:579px;height:3px;width:1px;background:#c6c6c6"></div><div class="tk" style="left:192.1px;top:606px;height:3px;width:1px;background:#c6c6c6"></div><div class="tk" style="left:201.8px;top:579px;height:3px;width:1px;background:#c6c6c6"></div><div class="tk" style="left:201.8px;top:606px;height:3px;width:1px;background:#c6c6c6"></div><div class="tk" style="left:221.1px;top:579px;height:3px;width:1px;background:#c6c6c6"></div><div class="tk" style="left:221.1px;top:606px;height:3px;width:1px;background:#c6c6c6"></div><div class="tk" style="left:230.7px;top:579px;height:3px;width:1px;background:#c6c6c6"></div><div class="tk" style="left:230.7px;top:606px;height:3px;width:1px;background:#c6c6c6"></div><div class="tk" style="left:240.4px;top:579px;height:3px;width:1px;background:#c6c6c6"></div><div class="tk" style="left:240.4px;top:606px;height:3px;width:1px;background:#c6c6c6"></div><div class="tk" style="left:250.0px;top:579px;height:3px;width:1px;background:#c6c6c6"></div><div class="tk" style="left:250.0px;top:606px;height:3px;width:1px;background:#c6c6c6"></div><div class="tk" style="left:259.6px;top:579px;height:3px;width:1px;background:#c6c6c6"></div><div class="tk" style="left:259.6px;top:606px;height:3px;width:1px;background:#c6c6c6"></div><div class="tk" style="left:269.3px;top:579px;height:3px;width:1px;background:#c6c6c6"></div><div class="tk" style="left:269.3px;top:606px;height:3px;width:1px;background:#c6c6c6"></div><div class="tk" style="left:279.0px;top:579px;height:3px;width:1px;background:#c6c6c6"></div><div class="tk" style="left:279.0px;top:606px;height:3px;width:1px;background:#c6c6c6"></div><div class="tk" style="left:288.6px;top:579px;height:3px;width:1px;background:#c6c6c6"></div><div class="tk" style="left:288.6px;top:606px;height:3px;width:1px;background:#c6c6c6"></div><div class="tk" style="left:298.2px;top:579px;height:3px;width:1px;background:#c6c6c6"></div><div class="tk" style="left:298.2px;top:606px;height:3px;width:1px;background:#c6c6c6"></div><div class="tk" style="left:307.9px;top:578px;height:4px;width:1px;background:#c6c6c6"></div><div class="tk" style="left:307.9px;top:606px;height:4px;width:1px;background:#c6c6c6"></div><div style="left:211.0px;top:573px;width:2px;height:9.6px;background:#fff"></div><div style="left:211.0px;top:605.2px;width:2px;height:11.799999999999997px;background:#fff"></div><div class="tr" style="left:110px;top:592px;width:204px"></div><div class="th" style="left:207.9px;top:584px;width:8.6px;height:19px"></div>
<div class="sp" style="left:328px;top:582px;width:78px;height:24px"></div>
<div style="left:391px;top:583px;width:16px;height:24px;background:#fff"><div style="left:1px;top:1px;width:14px;height:22px;box-sizing:border-box;border:1px solid #a8a8b0"></div><div style="left:1px;top:11.3px;width:14px;height:1.3px;background:#a4a4ac"></div><div class="sb" style="top:3px"><svg width="6" height="3" style="left:1.9px;top:2px"><path d="M0 3.2L2.6 0L5.2 3.2z" fill="#4c60bc"/></svg></div><div class="sb" style="top:13.7px"><svg width="6" height="4" style="left:1.9px;top:2.3px"><path d="M0 0L2.6 3.2L5.2 0z" fill="#4c60bc"/></svg></div></div>
<div class="b" style="left:484px;top:581px;width:58px;height:26px;background:#6a6a6a"></div>
<div class="g" style="left:630.2px;top:365px;width:532.8px;height:265px"></div>
<div style="left:636.2px;top:363px;width:64.79999999999995px;height:6px;background:#585858"></div>
<div style="left:700px;top:380px;width:32px;height:32px;background:#000;box-sizing:border-box;border:1.5px solid #fff;border-top-color:#8c8c8c;border-left-color:#8c8c8c"></div>
<div class="sw" style="left:757px;top:379px;width:15px;height:15px;background:#fff"></div>
<div class="sw" style="left:757px;top:398px;width:15px;height:15px;background:#fff"></div>
<div class="sw" style="left:777px;top:379px;width:15px;height:15px;background:#ff0"></div>
<div class="sw" style="left:777px;top:398px;width:15px;height:15px;background:#fff"></div>
<div class="sw" style="left:797px;top:379px;width:15px;height:15px;background:#0ff"></div>
<div class="sw" style="left:797px;top:398px;width:15px;height:15px;background:#fff"></div>
<div class="sw" style="left:817px;top:379px;width:15px;height:15px;background:#0f0"></div>
<div class="sw" style="left:817px;top:398px;width:15px;height:15px;background:#fff"></div>
<div class="sw" style="left:837px;top:379px;width:15px;height:15px;background:#f0f"></div>
<div class="sw" style="left:837px;top:398px;width:15px;height:15px;background:#fff"></div>
<div class="sw" style="left:857px;top:379px;width:15px;height:15px;background:#f00"></div>
<div class="sw" style="left:857px;top:398px;width:15px;height:15px;background:#fff"></div>
<div class="sw" style="left:877px;top:379px;width:15px;height:15px;background:#00f"></div>
<div class="sw" style="left:877px;top:398px;width:15px;height:15px;background:#fff"></div>
<div class="sw" style="left:897px;top:379px;width:15px;height:15px;background:#000"></div>
<div class="sw" style="left:897px;top:398px;width:15px;height:15px;background:#fff"></div>
<div style="left:1010px;top:380px;width:30px;height:30px;border:1px solid #fff;background:linear-gradient(rgba(128,128,128,0) 0,rgba(128,128,128,.35) 50%,rgba(128,128,128,.95) 100%),linear-gradient(90deg,#f00 0,#ff0 17%,#0f0 33%,#0ff 50%,#00f 67%,#f0f 83%,#f00 100%)"></div>
<div style="left:710px;top:432px;width:220px;height:44px;background:#bc0000"></div>
<div class="tk" style="left:731.8px;top:438px;height:3px;width:1px;background:#c6c6c6"></div><div class="tk" style="left:731.8px;top:465px;height:3px;width:1px;background:#c6c6c6"></div><div class="tk" style="left:741.0px;top:438px;height:3px;width:1px;background:#c6c6c6"></div><div class="tk" style="left:741.0px;top:465px;height:3px;width:1px;background:#c6c6c6"></div><div class="tk" style="left:750.1px;top:438px;height:3px;width:1px;background:#c6c6c6"></div><div class="tk" style="left:750.1px;top:465px;height:3px;width:1px;background:#c6c6c6"></div><div class="tk" style="left:759.3px;top:438px;height:3px;width:1px;background:#c6c6c6"></div><div class="tk" style="left:759.3px;top:465px;height:3px;width:1px;background:#c6c6c6"></div><div class="tk" style="left:768.5px;top:438px;height:3px;width:1px;background:#c6c6c6"></div><div class="tk" style="left:768.5px;top:465px;height:3px;width:1px;background:#c6c6c6"></div><div class="tk" style="left:777.6px;top:438px;height:3px;width:1px;background:#c6c6c6"></div><div class="tk" style="left:777.6px;top:465px;height:3px;width:1px;background:#c6c6c6"></div><div class="tk" style="left:786.8px;top:438px;height:3px;width:1px;background:#c6c6c6"></div><div class="tk" style="left:786.8px;top:465px;height:3px;width:1px;background:#c6c6c6"></div><div class="tk" style="left:796.0px;top:438px;height:3px;width:1px;background:#c6c6c6"></div><div class="tk" style="left:796.0px;top:465px;height:3px;width:1px;background:#c6c6c6"></div><div class="tk" style="left:805.2px;top:438px;height:3px;width:1px;background:#c6c6c6"></div><div class="tk" style="left:805.2px;top:465px;height:3px;width:1px;background:#c6c6c6"></div><div class="tk" style="left:814.3px;top:438px;height:3px;width:1px;background:#c6c6c6"></div><div class="tk" style="left:814.3px;top:465px;height:3px;width:1px;background:#c6c6c6"></div><div class="tk" style="left:823.5px;top:438px;height:3px;width:1px;background:#c6c6c6"></div><div class="tk" style="left:823.5px;top:465px;height:3px;width:1px;background:#c6c6c6"></div><div class="tk" style="left:832.7px;top:438px;height:3px;width:1px;background:#c6c6c6"></div><div class="tk" style="left:832.7px;top:465px;height:3px;width:1px;background:#c6c6c6"></div><div class="tk" style="left:841.8px;top:438px;height:3px;width:1px;background:#c6c6c6"></div><div class="tk" style="left:841.8px;top:465px;height:3px;width:1px;background:#c6c6c6"></div><div class="tk" style="left:851.0px;top:438px;height:3px;width:1px;background:#c6c6c6"></div><div class="tk" style="left:851.0px;top:465px;height:3px;width:1px;background:#c6c6c6"></div><div class="tk" style="left:860.2px;top:438px;height:3px;width:1px;background:#c6c6c6"></div><div class="tk" style="left:860.2px;top:465px;height:3px;width:1px;background:#c6c6c6"></div><div class="tk" style="left:869.3px;top:438px;height:3px;width:1px;background:#c6c6c6"></div><div class="tk" style="left:869.3px;top:465px;height:3px;width:1px;background:#c6c6c6"></div><div class="tk" style="left:878.5px;top:438px;height:3px;width:1px;background:#c6c6c6"></div><div class="tk" style="left:878.5px;top:465px;height:3px;width:1px;background:#c6c6c6"></div><div class="tk" style="left:887.7px;top:438px;height:3px;width:1px;background:#c6c6c6"></div><div class="tk" style="left:887.7px;top:465px;height:3px;width:1px;background:#c6c6c6"></div><div class="tk" style="left:896.9px;top:438px;height:3px;width:1px;background:#c6c6c6"></div><div class="tk" style="left:896.9px;top:465px;height:3px;width:1px;background:#c6c6c6"></div><div class="tk" style="left:906.0px;top:438px;height:3px;width:1px;background:#c6c6c6"></div><div class="tk" style="left:906.0px;top:465px;height:3px;width:1px;background:#c6c6c6"></div><div class="tk" style="left:915.2px;top:438px;height:3px;width:1px;background:#c6c6c6"></div><div class="tk" style="left:916.4px;top:437px;height:3px;width:1px;background:#b4b4b4"></div><div class="tk" style="left:915.2px;top:465px;height:3px;width:1px;background:#c6c6c6"></div><div class="tk" style="left:916.4px;top:466px;height:3px;width:1px;background:#b4b4b4"></div><div style="left:722px;top:432px;width:2px;height:10px;background:#fff"></div><div style="left:722px;top:464px;width:2px;height:12px;background:#fff"></div><div class="tr" style="left:727px;top:451px;width:195px"></div><div class="th" style="left:718.8px;top:443px;width:8.6px;height:18.8px"></div>
<div class="sp" style="left:936px;top:441px;width:78px;height:24px"></div>
<div style="left:999px;top:442px;width:16px;height:24px;background:#fff"><div style="left:1px;top:1px;width:14px;height:22px;box-sizing:border-box;border:1px solid #a8a8b0"></div><div style="left:1px;top:11.3px;width:14px;height:1.3px;background:#a4a4ac"></div><div class="sb" style="top:3px"><svg width="6" height="3" style="left:1.9px;top:2px"><path d="M0 3.2L2.6 0L5.2 3.2z" fill="#4c60bc"/></svg></div><div class="sb" style="top:13.7px"><svg width="6" height="4" style="left:1.9px;top:2.3px"><path d="M0 0L2.6 3.2L5.2 0z" fill="#4c60bc"/></svg></div></div>
<div class="b" style="left:1092px;top:440px;width:58px;height:26px;background:#6a6a6a"></div>
<div style="left:710px;top:484px;width:220px;height:44px;background:#008000"></div>
<div class="tk" style="left:731.8px;top:490px;height:3px;width:1px;background:#c6c6c6"></div><div class="tk" style="left:731.8px;top:517px;height:3px;width:1px;background:#c6c6c6"></div><div class="tk" style="left:741.0px;top:490px;height:3px;width:1px;background:#c6c6c6"></div><div class="tk" style="left:741.0px;top:517px;height:3px;width:1px;background:#c6c6c6"></div><div class="tk" style="left:750.1px;top:490px;height:3px;width:1px;background:#c6c6c6"></div><div class="tk" style="left:750.1px;top:517px;height:3px;width:1px;background:#c6c6c6"></div><div class="tk" style="left:759.3px;top:490px;height:3px;width:1px;background:#c6c6c6"></div><div class="tk" style="left:759.3px;top:517px;height:3px;width:1px;background:#c6c6c6"></div><div class="tk" style="left:768.5px;top:490px;height:3px;width:1px;background:#c6c6c6"></div><div class="tk" style="left:768.5px;top:517px;height:3px;width:1px;background:#c6c6c6"></div><div class="tk" style="left:777.6px;top:490px;height:3px;width:1px;background:#c6c6c6"></div><div class="tk" style="left:777.6px;top:517px;height:3px;width:1px;background:#c6c6c6"></div><div class="tk" style="left:786.8px;top:490px;height:3px;width:1px;background:#c6c6c6"></div><div class="tk" style="left:786.8px;top:517px;height:3px;width:1px;background:#c6c6c6"></div><div class="tk" style="left:796.0px;top:490px;height:3px;width:1px;background:#c6c6c6"></div><div class="tk" style="left:796.0px;top:517px;height:3px;width:1px;background:#c6c6c6"></div><div class="tk" style="left:805.2px;top:490px;height:3px;width:1px;background:#c6c6c6"></div><div class="tk" style="left:805.2px;top:517px;height:3px;width:1px;background:#c6c6c6"></div><div class="tk" style="left:814.3px;top:490px;height:3px;width:1px;background:#c6c6c6"></div><div class="tk" style="left:814.3px;top:517px;height:3px;width:1px;background:#c6c6c6"></div><div class="tk" style="left:823.5px;top:490px;height:3px;width:1px;background:#c6c6c6"></div><div class="tk" style="left:823.5px;top:517px;height:3px;width:1px;background:#c6c6c6"></div><div class="tk" style="left:832.7px;top:490px;height:3px;width:1px;background:#c6c6c6"></div><div class="tk" style="left:832.7px;top:517px;height:3px;width:1px;background:#c6c6c6"></div><div class="tk" style="left:841.8px;top:490px;height:3px;width:1px;background:#c6c6c6"></div><div class="tk" style="left:841.8px;top:517px;height:3px;width:1px;background:#c6c6c6"></div><div class="tk" style="left:851.0px;top:490px;height:3px;width:1px;background:#c6c6c6"></div><div class="tk" style="left:851.0px;top:517px;height:3px;width:1px;background:#c6c6c6"></div><div class="tk" style="left:860.2px;top:490px;height:3px;width:1px;background:#c6c6c6"></div><div class="tk" style="left:860.2px;top:517px;height:3px;width:1px;background:#c6c6c6"></div><div class="tk" style="left:869.3px;top:490px;height:3px;width:1px;background:#c6c6c6"></div><div class="tk" style="left:869.3px;top:517px;height:3px;width:1px;background:#c6c6c6"></div><div class="tk" style="left:878.5px;top:490px;height:3px;width:1px;background:#c6c6c6"></div><div class="tk" style="left:878.5px;top:517px;height:3px;width:1px;background:#c6c6c6"></div><div class="tk" style="left:887.7px;top:490px;height:3px;width:1px;background:#c6c6c6"></div><div class="tk" style="left:887.7px;top:517px;height:3px;width:1px;background:#c6c6c6"></div><div class="tk" style="left:896.9px;top:490px;height:3px;width:1px;background:#c6c6c6"></div><div class="tk" style="left:896.9px;top:517px;height:3px;width:1px;background:#c6c6c6"></div><div class="tk" style="left:906.0px;top:490px;height:3px;width:1px;background:#c6c6c6"></div><div class="tk" style="left:906.0px;top:517px;height:3px;width:1px;background:#c6c6c6"></div><div class="tk" style="left:915.2px;top:490px;height:3px;width:1px;background:#c6c6c6"></div><div class="tk" style="left:916.4px;top:489px;height:3px;width:1px;background:#b4b4b4"></div><div class="tk" style="left:915.2px;top:517px;height:3px;width:1px;background:#c6c6c6"></div><div class="tk" style="left:916.4px;top:518px;height:3px;width:1px;background:#b4b4b4"></div><div style="left:722px;top:484px;width:2px;height:10px;background:#fff"></div><div style="left:722px;top:516px;width:2px;height:12px;background:#fff"></div><div class="tr" style="left:727px;top:503px;width:195px"></div><div class="th" style="left:718.8px;top:495px;width:8.6px;height:18.8px"></div>
<div class="sp" style="left:936px;top:493px;width:78px;height:24px"></div>
<div style="left:999px;top:494px;width:16px;height:24px;background:#fff"><div style="left:1px;top:1px;width:14px;height:22px;box-sizing:border-box;border:1px solid #a8a8b0"></div><div style="left:1px;top:11.3px;width:14px;height:1.3px;background:#a4a4ac"></div><div class="sb" style="top:3px"><svg width="6" height="3" style="left:1.9px;top:2px"><path d="M0 3.2L2.6 0L5.2 3.2z" fill="#4c60bc"/></svg></div><div class="sb" style="top:13.7px"><svg width="6" height="4" style="left:1.9px;top:2.3px"><path d="M0 0L2.6 3.2L5.2 0z" fill="#4c60bc"/></svg></div></div>
<div class="b" style="left:1092px;top:492px;width:58px;height:26px;background:#6a6a6a"></div>
<div style="left:710px;top:535px;width:220px;height:44px;background:#0000be"></div>
<div class="tk" style="left:731.8px;top:541px;height:3px;width:1px;background:#c6c6c6"></div><div class="tk" style="left:731.8px;top:568px;height:3px;width:1px;background:#c6c6c6"></div><div class="tk" style="left:741.0px;top:541px;height:3px;width:1px;background:#c6c6c6"></div><div class="tk" style="left:741.0px;top:568px;height:3px;width:1px;background:#c6c6c6"></div><div class="tk" style="left:750.1px;top:541px;height:3px;width:1px;background:#c6c6c6"></div><div class="tk" style="left:750.1px;top:568px;height:3px;width:1px;background:#c6c6c6"></div><div class="tk" style="left:759.3px;top:541px;height:3px;width:1px;background:#c6c6c6"></div><div class="tk" style="left:759.3px;top:568px;height:3px;width:1px;background:#c6c6c6"></div><div class="tk" style="left:768.5px;top:541px;height:3px;width:1px;background:#c6c6c6"></div><div class="tk" style="left:768.5px;top:568px;height:3px;width:1px;background:#c6c6c6"></div><div class="tk" style="left:777.6px;top:541px;height:3px;width:1px;background:#c6c6c6"></div><div class="tk" style="left:777.6px;top:568px;height:3px;width:1px;background:#c6c6c6"></div><div class="tk" style="left:786.8px;top:541px;height:3px;width:1px;background:#c6c6c6"></div><div class="tk" style="left:786.8px;top:568px;height:3px;width:1px;background:#c6c6c6"></div><div class="tk" style="left:796.0px;top:541px;height:3px;width:1px;background:#c6c6c6"></div><div class="tk" style="left:796.0px;top:568px;height:3px;width:1px;background:#c6c6c6"></div><div class="tk" style="left:805.2px;top:541px;height:3px;width:1px;background:#c6c6c6"></div><div class="tk" style="left:805.2px;top:568px;height:3px;width:1px;background:#c6c6c6"></div><div class="tk" style="left:814.3px;top:541px;height:3px;width:1px;background:#c6c6c6"></div><div class="tk" style="left:814.3px;top:568px;height:3px;width:1px;background:#c6c6c6"></div><div class="tk" style="left:823.5px;top:541px;height:3px;width:1px;background:#c6c6c6"></div><div class="tk" style="left:823.5px;top:568px;height:3px;width:1px;background:#c6c6c6"></div><div class="tk" style="left:832.7px;top:541px;height:3px;width:1px;background:#c6c6c6"></div><div class="tk" style="left:832.7px;top:568px;height:3px;width:1px;background:#c6c6c6"></div><div class="tk" style="left:841.8px;top:541px;height:3px;width:1px;background:#c6c6c6"></div><div class="tk" style="left:841.8px;top:568px;height:3px;width:1px;background:#c6c6c6"></div><div class="tk" style="left:851.0px;top:541px;height:3px;width:1px;background:#c6c6c6"></div><div class="tk" style="left:851.0px;top:568px;height:3px;width:1px;background:#c6c6c6"></div><div class="tk" style="left:860.2px;top:541px;height:3px;width:1px;background:#c6c6c6"></div><div class="tk" style="left:860.2px;top:568px;height:3px;width:1px;background:#c6c6c6"></div><div class="tk" style="left:869.3px;top:541px;height:3px;width:1px;background:#c6c6c6"></div><div class="tk" style="left:869.3px;top:568px;height:3px;width:1px;background:#c6c6c6"></div><div class="tk" style="left:878.5px;top:541px;height:3px;width:1px;background:#c6c6c6"></div><div class="tk" style="left:878.5px;top:568px;height:3px;width:1px;background:#c6c6c6"></div><div class="tk" style="left:887.7px;top:541px;height:3px;width:1px;background:#c6c6c6"></div><div class="tk" style="left:887.7px;top:568px;height:3px;width:1px;background:#c6c6c6"></div><div class="tk" style="left:896.9px;top:541px;height:3px;width:1px;background:#c6c6c6"></div><div class="tk" style="left:896.9px;top:568px;height:3px;width:1px;background:#c6c6c6"></div><div class="tk" style="left:906.0px;top:541px;height:3px;width:1px;background:#c6c6c6"></div><div class="tk" style="left:906.0px;top:568px;height:3px;width:1px;background:#c6c6c6"></div><div class="tk" style="left:915.2px;top:541px;height:3px;width:1px;background:#c6c6c6"></div><div class="tk" style="left:916.4px;top:540px;height:3px;width:1px;background:#b4b4b4"></div><div class="tk" style="left:915.2px;top:568px;height:3px;width:1px;background:#c6c6c6"></div><div class="tk" style="left:916.4px;top:569px;height:3px;width:1px;background:#b4b4b4"></div><div style="left:722px;top:535px;width:2px;height:10px;background:#fff"></div><div style="left:722px;top:567px;width:2px;height:12px;background:#fff"></div><div class="tr" style="left:727px;top:554px;width:195px"></div><div class="th" style="left:718.8px;top:546px;width:8.6px;height:18.8px"></div>
<div class="sp" style="left:936px;top:544px;width:78px;height:24px"></div>
<div style="left:999px;top:545px;width:16px;height:24px;background:#fff"><div style="left:1px;top:1px;width:14px;height:22px;box-sizing:border-box;border:1px solid #a8a8b0"></div><div style="left:1px;top:11.3px;width:14px;height:1.3px;background:#a4a4ac"></div><div class="sb" style="top:3px"><svg width="6" height="3" style="left:1.9px;top:2px"><path d="M0 3.2L2.6 0L5.2 3.2z" fill="#4c60bc"/></svg></div><div class="sb" style="top:13.7px"><svg width="6" height="4" style="left:1.9px;top:2.3px"><path d="M0 0L2.6 3.2L5.2 0z" fill="#4c60bc"/></svg></div></div>
<div class="b" style="left:1092px;top:543px;width:58px;height:26px;background:#6a6a6a"></div>
<div style="left:711px;top:584px;width:200px;height:40px;background:#606060"></div>
<div style="left:807px;top:589px;width:100px;height:30px;background:#5c5c5c"></div>
<div class="b" style="left:811px;top:592px;width:40px;height:22px;background:#6666e6"></div>
<div class="b" style="left:861px;top:592px;width:40px;height:22px;background:#6a6a6a"></div>
<div class="b" style="left:552px;top:649px;width:73px;height:21px;background:#6a6a6a"></div>
<div style="left:0;top:0;width:1178px;height:686px;will-change:transform"><div class="t" style="left:23.20px;top:36.84px;font-size:12px;line-height:12px;font-weight:bold;color:#fff;letter-spacing:-0.234px;word-spacing:2.2px;">FS</div><div class="t" style="left:49.50px;top:64.16px;font-size:12px;line-height:12px;font-weight:bold;color:#fff;letter-spacing:0.000px;word-spacing:2.2px;"></div><div class="t" style="left:35.30px;top:64.14px;font-size:12px;line-height:12px;font-weight:bold;color:#fff;letter-spacing:-0.081px;word-spacing:2.2px;">FS 1</div><div class="t" style="left:100.50px;top:64.16px;font-size:12px;line-height:12px;font-weight:bold;color:#fff;letter-spacing:0.000px;word-spacing:2.2px;"></div><div class="t" style="left:86.30px;top:64.14px;font-size:12px;line-height:12px;font-weight:bold;color:#fff;letter-spacing:-0.081px;word-spacing:2.2px;">FS 2</div><div class="t" style="left:151.50px;top:64.16px;font-size:12px;line-height:12px;font-weight:bold;color:#fff;letter-spacing:0.000px;word-spacing:2.2px;"></div><div class="t" style="left:137.30px;top:64.14px;font-size:12px;line-height:12px;font-weight:bold;color:#fff;letter-spacing:-0.081px;word-spacing:2.2px;">FS 3</div><div class="t" style="left:202.50px;top:64.16px;font-size:12px;line-height:12px;font-weight:bold;color:#fff;letter-spacing:0.000px;word-spacing:2.2px;"></div><div class="t" style="left:188.30px;top:64.14px;font-size:12px;line-height:12px;font-weight:bold;color:#fff;letter-spacing:-0.081px;word-spacing:2.2px;">FS 4</div><div class="t" style="left:253.50px;top:64.16px;font-size:12px;line-height:12px;font-weight:bold;color:#fff;letter-spacing:0.000px;word-spacing:2.2px;"></div><div class="t" style="left:239.30px;top:64.14px;font-size:12px;line-height:12px;font-weight:bold;color:#fff;letter-spacing:-0.081px;word-spacing:2.2px;">FS 5</div><div class="t" style="left:23.20px;top:112.84px;font-size:12px;line-height:12px;font-weight:bold;color:#fff;letter-spacing:-0.037px;word-spacing:2.2px;">Convert Mode</div><div class="t" style="left:26.50px;top:136.84px;font-size:12px;line-height:12px;font-weight:bold;color:#fff;letter-spacing:-0.610px;word-spacing:2.2px;">Mode</div><div class="t" style="left:82.50px;top:136.84px;font-size:12px;line-height:12px;font-weight:bold;color:#000;letter-spacing:-0.132px;word-spacing:2.2px;">1080i</div><div class="t" style="left:78.50px;top:162.84px;font-size:12px;line-height:12px;font-weight:bold;color:#fff;letter-spacing:-0.170px;word-spacing:2.2px;">SD</div><div class="t" style="left:110.50px;top:162.84px;font-size:12px;line-height:12px;font-weight:bold;color:#9a9a9a;letter-spacing:0.177px;word-spacing:2.2px;">(4:3) AFD</div><div class="t" style="left:26.50px;top:175.84px;font-size:12px;line-height:12px;font-weight:bold;color:#fff;letter-spacing:0.197px;word-spacing:2.2px;">Aspect</div><div class="t" style="left:79.50px;top:188.84px;font-size:12px;line-height:12px;font-weight:bold;color:#fff;letter-spacing:-0.831px;word-spacing:2.2px;">HD</div><div class="t" style="left:110.50px;top:188.84px;font-size:12px;line-height:12px;font-weight:bold;color:#000;letter-spacing:0.193px;word-spacing:2.2px;">(16:9) AFD</div><div class="t" style="left:26.00px;top:214.84px;font-size:12px;line-height:12px;font-weight:bold;color:#fff;letter-spacing:-0.004px;word-spacing:2.2px;">SD Input</div><div class="t" style="left:168.00px;top:215.16px;font-size:12px;line-height:12px;font-weight:bold;color:#fff;letter-spacing:0.000px;word-spacing:2.2px;"></div><div class="t" style="left:155.00px;top:215.84px;font-size:12px;line-height:12px;font-weight:bold;color:#fff;letter-spacing:-0.603px;word-spacing:2.2px;">4 : 3</div><div class="t" style="left:298.50px;top:215.16px;font-size:12px;line-height:12px;font-weight:bold;color:#fff;letter-spacing:0.000px;word-spacing:2.2px;"></div><div class="t" style="left:283.00px;top:215.84px;font-size:12px;line-height:12px;font-weight:bold;color:#fff;letter-spacing:-0.817px;word-spacing:2.2px;">16 : 9</div><div class="t" style="left:26.50px;top:240.84px;font-size:12px;line-height:12px;font-weight:bold;color:#fff;letter-spacing:0.066px;word-spacing:2.2px;">Format</div><div class="t" style="left:79.50px;top:240.84px;font-size:12px;line-height:12px;font-weight:bold;color:#fff;letter-spacing:0.960px;word-spacing:2.2px;">525/60</div><div class="t" style="left:185.00px;top:240.84px;font-size:12px;line-height:12px;font-weight:bold;color:#fff;letter-spacing:-1.016px;word-spacing:2.2px;">=></div><div class="t" style="left:211.00px;top:240.84px;font-size:12px;line-height:12px;font-weight:bold;color:#fff;letter-spacing:0.756px;word-spacing:2.2px;">1080/59i</div><div class="t" style="left:172.00px;top:266.84px;font-size:12px;line-height:12px;font-weight:bold;color:#fff;letter-spacing:0.176px;word-spacing:2.2px;">(4:3) Undefined</div><div class="t" style="left:26.50px;top:292.84px;font-size:12px;line-height:12px;font-weight:bold;color:#fff;letter-spacing:0.197px;word-spacing:2.2px;">Aspect</div><div class="t" style="left:172.00px;top:318.84px;font-size:12px;line-height:12px;font-weight:bold;color:#fff;letter-spacing:0.176px;word-spacing:2.2px;">(4:3) Undefined</div><div class="t" style="left:384.20px;top:112.84px;font-size:12px;line-height:12px;font-weight:bold;color:#fff;letter-spacing:-0.091px;word-spacing:2.2px;">Image Improve</div><div class="t" style="left:387.50px;top:134.84px;font-size:12px;line-height:12px;font-weight:bold;color:#fff;letter-spacing:-0.064px;word-spacing:2.2px;">Motion Sense</div><div class="t" style="left:494.50px;top:134.84px;font-size:12px;line-height:12px;font-weight:bold;color:#000;letter-spacing:-0.025px;word-spacing:2.2px;">Adaptive</div><div class="t" style="left:387.50px;top:160.84px;font-size:12px;line-height:12px;font-weight:bold;color:#fff;letter-spacing:0.229px;word-spacing:2.2px;">Anti Aliasing H</div><div class="t" style="left:494.50px;top:160.84px;font-size:12px;line-height:12px;font-weight:bold;color:#000;letter-spacing:-0.169px;word-spacing:2.2px;">Normal</div><div class="t" style="left:387.50px;top:186.84px;font-size:12px;line-height:12px;font-weight:bold;color:#fff;letter-spacing:0.276px;word-spacing:2.2px;">Anti Aliasing V</div><div class="t" style="left:494.50px;top:186.84px;font-size:12px;line-height:12px;font-weight:bold;color:#000;letter-spacing:-0.169px;word-spacing:2.2px;">Normal</div><div class="t" style="left:387.50px;top:212.84px;font-size:12px;line-height:12px;font-weight:bold;color:#fff;letter-spacing:0.022px;word-spacing:2.2px;">Enhance Level</div><div class="t" style="left:494.50px;top:212.84px;font-size:12px;line-height:12px;font-weight:bold;color:#000;letter-spacing:-0.065px;word-spacing:2.2px;">Level 0</div><div class="t" style="left:638.20px;top:112.84px;font-size:12px;line-height:12px;font-weight:bold;color:#fff;letter-spacing:-0.217px;word-spacing:2.2px;">Cropping</div><div class="t" style="left:641.30px;top:150.84px;font-size:12px;line-height:12px;font-weight:bold;color:#fff;letter-spacing:0.234px;word-spacing:2.2px;">Left</div><div class="t" style="left:985.70px;top:149.89px;font-size:17.5px;line-height:17.5px;font-weight:normal;color:#fff;letter-spacing:0.000px;transform:scaleX(1.1507);transform-origin:0 0;-webkit-text-stroke:0.25px #fff;">0</div><div class="t" style="left:1026.00px;top:150.81px;font-size:17px;line-height:17px;font-weight:normal;color:#fff;letter-spacing:0.000px;transform:scaleX(1.1670);transform-origin:0 0;-webkit-text-stroke:0.25px #fff;">Pixel</div><div class="t" style="left:1101.50px;top:152.00px;font-size:15px;line-height:15px;font-weight:bold;color:#fff;letter-spacing:0.250px;">Unity</div><div class="t" style="left:641.30px;top:203.84px;font-size:12px;line-height:12px;font-weight:bold;color:#fff;letter-spacing:0.011px;word-spacing:2.2px;">Right</div><div class="t" style="left:985.70px;top:202.89px;font-size:17.5px;line-height:17.5px;font-weight:normal;color:#fff;letter-spacing:0.000px;transform:scaleX(1.1507);transform-origin:0 0;-webkit-text-stroke:0.25px #fff;">0</div><div class="t" style="left:1026.00px;top:203.81px;font-size:17px;line-height:17px;font-weight:normal;color:#fff;letter-spacing:0.000px;transform:scaleX(1.1670);transform-origin:0 0;-webkit-text-stroke:0.25px #fff;">Pixel</div><div class="t" style="left:1101.50px;top:205.00px;font-size:15px;line-height:15px;font-weight:bold;color:#fff;letter-spacing:0.250px;">Unity</div><div class="t" style="left:641.30px;top:256.84px;font-size:12px;line-height:12px;font-weight:bold;color:#fff;letter-spacing:-0.199px;word-spacing:2.2px;">Top</div><div class="t" style="left:985.70px;top:255.89px;font-size:17.5px;line-height:17.5px;font-weight:normal;color:#fff;letter-spacing:0.000px;transform:scaleX(1.1507);transform-origin:0 0;-webkit-text-stroke:0.25px #fff;">0</div><div class="t" style="left:1026.00px;top:256.81px;font-size:17px;line-height:17px;font-weight:normal;color:#fff;letter-spacing:0.000px;transform:scaleX(1.1356);transform-origin:0 0;-webkit-text-stroke:0.25px #fff;">Line</div><div class="t" style="left:1101.50px;top:258.00px;font-size:15px;line-height:15px;font-weight:bold;color:#fff;letter-spacing:0.250px;">Unity</div><div class="t" style="left:641.30px;top:309.84px;font-size:12px;line-height:12px;font-weight:bold;color:#fff;letter-spacing:0.142px;word-spacing:2.2px;">Bottom</div><div class="t" style="left:985.70px;top:308.89px;font-size:17.5px;line-height:17.5px;font-weight:normal;color:#fff;letter-spacing:0.000px;transform:scaleX(1.1507);transform-origin:0 0;-webkit-text-stroke:0.25px #fff;">0</div><div class="t" style="left:1026.00px;top:309.81px;font-size:17px;line-height:17px;font-weight:normal;color:#fff;letter-spacing:0.000px;transform:scaleX(1.1356);transform-origin:0 0;-webkit-text-stroke:0.25px #fff;">Line</div><div class="t" style="left:1101.50px;top:311.00px;font-size:15px;line-height:15px;font-weight:bold;color:#fff;letter-spacing:0.250px;">Unity</div><div class="t" style="left:23.20px;top:358.84px;font-size:12px;line-height:12px;font-weight:bold;color:#fff;letter-spacing:0.156px;word-spacing:2.2px;">Resize</div><div class="t" style="left:26.30px;top:395.34px;font-size:12px;line-height:12px;font-weight:bold;color:#fff;letter-spacing:0.226px;word-spacing:2.2px;">Horizontal</div><div class="t" style="left:343.00px;top:395.89px;font-size:17.5px;line-height:17.5px;font-weight:normal;color:#fff;letter-spacing:0.802px;-webkit-text-stroke:0.25px #fff;">100.0</div><div class="t" style="left:415.00px;top:396.91px;font-size:17px;line-height:17px;font-weight:bold;color:#fff;letter-spacing:0.000px;transform:scaleX(0.6086);transform-origin:0 0;-webkit-text-stroke:0.7px #fff;">%</div><div class="t" style="left:470.70px;top:398.30px;font-size:15px;line-height:15px;font-weight:bold;color:#fff;letter-spacing:0.200px;">Unity</div><div class="t" style="left:26.30px;top:444.34px;font-size:12px;line-height:12px;font-weight:bold;color:#fff;letter-spacing:0.715px;word-spacing:2.2px;">Vertical</div><div class="t" style="left:343.00px;top:444.89px;font-size:17.5px;line-height:17.5px;font-weight:normal;color:#fff;letter-spacing:0.802px;-webkit-text-stroke:0.25px #fff;">100.0</div><div class="t" style="left:415.00px;top:445.91px;font-size:17px;line-height:17px;font-weight:bold;color:#fff;letter-spacing:0.000px;transform:scaleX(0.6086);transform-origin:0 0;-webkit-text-stroke:0.7px #fff;">%</div><div class="t" style="left:470.70px;top:447.30px;font-size:15px;line-height:15px;font-weight:bold;color:#fff;letter-spacing:0.200px;">Unity</div><div class="t" style="left:23.20px;top:490.84px;font-size:12px;line-height:12px;font-weight:bold;color:#fff;letter-spacing:0.067px;word-spacing:2.2px;">Position</div><div class="t" style="left:26.30px;top:531.84px;font-size:12px;line-height:12px;font-weight:bold;color:#fff;letter-spacing:0.226px;word-spacing:2.2px;">Horizontal</div><div class="t" style="left:377.70px;top:527.89px;font-size:17.5px;line-height:17.5px;font-weight:normal;color:#fff;letter-spacing:0.000px;transform:scaleX(1.1507);transform-origin:0 0;-webkit-text-stroke:0.25px #fff;">0</div><div class="t" style="left:417.90px;top:528.91px;font-size:17px;line-height:17px;font-weight:normal;color:#fff;letter-spacing:0.000px;transform:scaleX(1.1833);transform-origin:0 0;-webkit-text-stroke:0.25px #fff;">Pixel</div><div class="t" style="left:493.50px;top:530.20px;font-size:15px;line-height:15px;font-weight:bold;color:#fff;letter-spacing:0.250px;">Unity</div><div class="t" style="left:26.30px;top:589.84px;font-size:12px;line-height:12px;font-weight:bold;color:#fff;letter-spacing:0.715px;word-spacing:2.2px;">Vertical</div><div class="t" style="left:377.70px;top:585.89px;font-size:17.5px;line-height:17.5px;font-weight:normal;color:#fff;letter-spacing:0.000px;transform:scaleX(1.1507);transform-origin:0 0;-webkit-text-stroke:0.25px #fff;">0</div><div class="t" style="left:417.90px;top:586.91px;font-size:17px;line-height:17px;font-weight:normal;color:#fff;letter-spacing:0.000px;transform:scaleX(1.1543);transform-origin:0 0;-webkit-text-stroke:0.25px #fff;">Line</div><div class="t" style="left:493.50px;top:588.20px;font-size:15px;line-height:15px;font-weight:bold;color:#fff;letter-spacing:0.250px;">Unity</div><div class="t" style="left:638.20px;top:358.84px;font-size:12px;line-height:12px;font-weight:bold;color:#fff;letter-spacing:-0.045px;word-spacing:2.2px;">Side Color</div><div class="t" style="left:659.00px;top:389.84px;font-size:12px;line-height:12px;font-weight:bold;color:#fff;letter-spacing:-0.082px;word-spacing:2.2px;">Color</div><div class="t" style="left:940.70px;top:389.84px;font-size:12px;line-height:12px;font-weight:bold;color:#fff;letter-spacing:-0.026px;word-spacing:2.2px;">Edit Color</div><div class="t" style="left:658.00px;top:445.33px;font-size:14.5px;line-height:14.5px;font-weight:normal;color:#fff;letter-spacing:0.000px;transform:scaleX(1.0414);transform-origin:0 0;-webkit-text-stroke:0.25px #fff;">Red</div><div class="t" style="left:985.70px;top:444.89px;font-size:17.5px;line-height:17.5px;font-weight:normal;color:#fff;letter-spacing:0.000px;transform:scaleX(1.1507);transform-origin:0 0;-webkit-text-stroke:0.25px #fff;">0</div><div class="t" style="left:1101.50px;top:447.00px;font-size:15px;line-height:15px;font-weight:bold;color:#fff;letter-spacing:0.250px;">Unity</div><div class="t" style="left:658.00px;top:497.33px;font-size:14.5px;line-height:14.5px;font-weight:normal;color:#fff;letter-spacing:0.000px;transform:scaleX(1.1340);transform-origin:0 0;-webkit-text-stroke:0.25px #fff;">Green</div><div class="t" style="left:985.70px;top:496.89px;font-size:17.5px;line-height:17.5px;font-weight:normal;color:#fff;letter-spacing:0.000px;transform:scaleX(1.1507);transform-origin:0 0;-webkit-text-stroke:0.25px #fff;">0</div><div class="t" style="left:1101.50px;top:499.00px;font-size:15px;line-height:15px;font-weight:bold;color:#fff;letter-spacing:0.250px;">Unity</div><div class="t" style="left:658.00px;top:549.33px;font-size:14.5px;line-height:14.5px;font-weight:normal;color:#fff;letter-spacing:0.000px;transform:scaleX(1.1061);transform-origin:0 0;-webkit-text-stroke:0.25px #fff;">Blue</div><div class="t" style="left:985.70px;top:547.89px;font-size:17.5px;line-height:17.5px;font-weight:normal;color:#fff;letter-spacing:0.000px;transform:scaleX(1.1507);transform-origin:0 0;-webkit-text-stroke:0.25px #fff;">0</div><div class="t" style="left:1101.50px;top:550.00px;font-size:15px;line-height:15px;font-weight:bold;color:#fff;letter-spacing:0.250px;">Unity</div><div class="t" style="left:721.00px;top:597.64px;font-size:12px;line-height:12px;font-weight:bold;color:#fff;letter-spacing:0.008px;word-spacing:2.2px;">Group Adjust</div><div class="t" style="left:832.00px;top:598.16px;font-size:12px;line-height:12px;font-weight:bold;color:#fff;letter-spacing:0.000px;word-spacing:2.2px;"></div><div class="t" style="left:818.80px;top:597.62px;font-size:12.5px;line-height:12.5px;font-weight:bold;color:#fff;letter-spacing:-0.198px;word-spacing:2.2px;">OFF</div><div class="t" style="left:882.00px;top:598.16px;font-size:12px;line-height:12px;font-weight:bold;color:#fff;letter-spacing:0.000px;word-spacing:2.2px;"></div><div class="t" style="left:871.50px;top:597.62px;font-size:12.5px;line-height:12.5px;font-weight:bold;color:#fff;letter-spacing:-0.750px;word-spacing:2.2px;">ON</div><div class="t" style="left:589.50px;top:654.66px;font-size:12px;line-height:12px;font-weight:bold;color:#fff;letter-spacing:0.000px;word-spacing:2.2px;"></div><div class="t" style="left:572.00px;top:653.54px;font-size:12px;line-height:12px;font-weight:bold;color:#ececec;letter-spacing:0.081px;word-spacing:2.2px;">Close</div></div>
</body></html>
